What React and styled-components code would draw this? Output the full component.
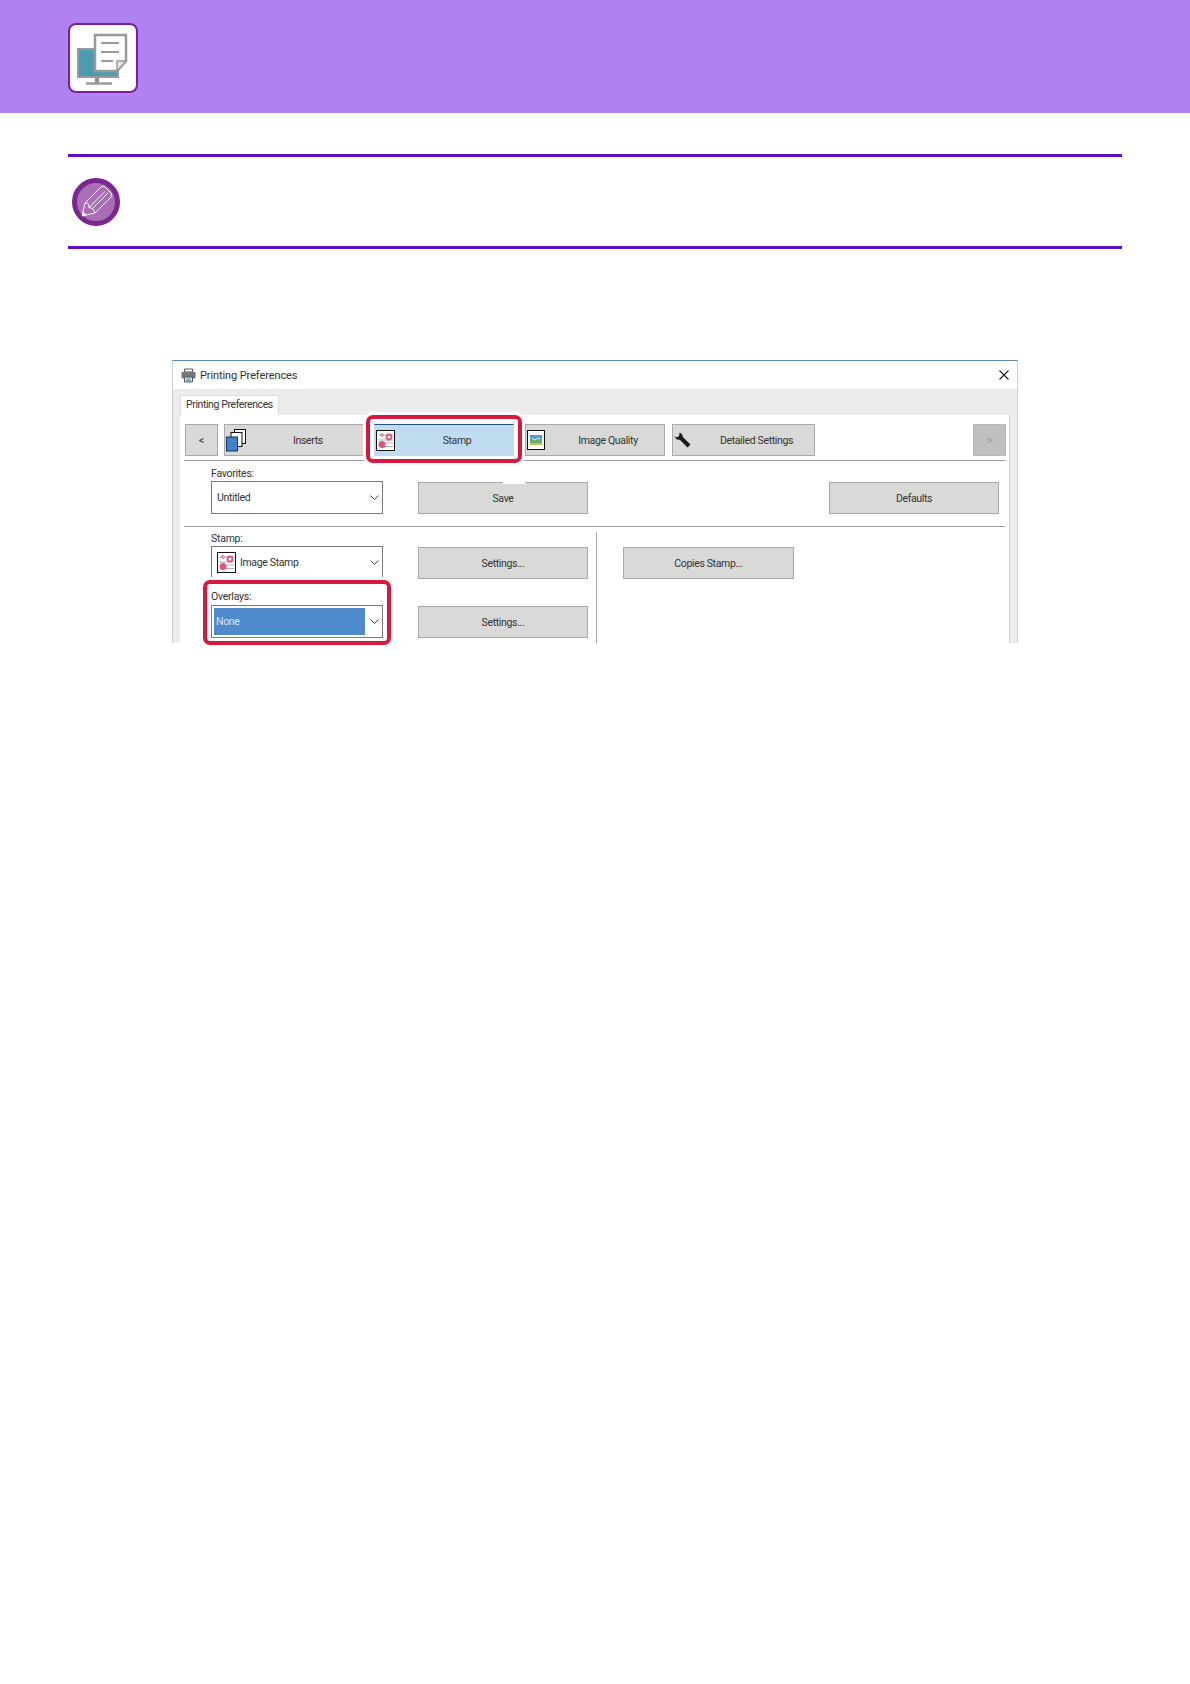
import React from "react";
import styled, { createGlobalStyle } from "styled-components";

const GlobalStyle = createGlobalStyle`
  html, body {
    margin: 0;
    padding: 0;
    background: #fff;
    font-family: Roboto, "Liberation Sans", sans-serif;
  }
  * {
    box-sizing: border-box;
  }
`;

const Page = styled.div`
  width: 1190px;
  height: 1684px;
  background: #fff;
  overflow: hidden;
`;

const Banner = styled.header`
  height: 113px;
  background: #b081f1;
  padding: 23px 0 0 68px;
`;

const IconTile = styled.div`
  width: 70px;
  height: 70px;
  background: #fff;
  border: 2px solid #7d1f98;
  border-radius: 8px;
`;

const NoteBar = styled.section`
  height: 95px;
  margin: 41px 68px 0;
  padding-left: 4px;
  border-top: 3px solid #5f0fc4;
  border-bottom: 3px solid #5f0fc4;
  display: flex;
  align-items: center;
`;

const Frame = styled.div`
  position: relative;
  width: 846px;
  margin: 111px 0 0 172px;
`;

const Window = styled.div`
  height: 283px;
  overflow: hidden;
  background: #ececec;
  border: 1px solid #c5d1df;
  border-top-color: #5f86ad;
  border-bottom: 0;
`;

const TitleBar = styled.div`
  height: 28px;
  background: #fff;
  padding: 0 8px;
  display: flex;
  align-items: center;
  gap: 4px;
  font-size: 11px;
  letter-spacing: -0.1px;
  color: #333;
`;

const CloseGlyph = styled.svg`
  margin-left: auto;
`;

const TabStrip = styled.div`
  height: 26px;
  padding: 6px 0 0 7px;
`;

const Tab = styled.div`
  width: 99px;
  height: 20px;
  background: #fff;
  border: 1px solid #dcdcdc;
  border-bottom: 0;
  padding-left: 5px;
  font-size: 10.5px;
  letter-spacing: -0.4px;
  line-height: 18px;
  white-space: nowrap;
  color: #333;
`;

const Panel = styled.div`
  margin: 0 7px;
  height: 240px;
  background: #fff;
  border-right: 1px solid #d0d0d0;
`;

const Toolbar = styled.div`
  display: flex;
  padding: 9px 3px 0 5px;
  height: 45px;
`;

const ToolButton = styled.div`
  width: ${(p) => p.$width}px;
  margin-left: ${(p) => p.$gap || 0}px;
  height: 32px;
  display: flex;
  align-items: center;
  font-size: 10.5px;
  letter-spacing: -0.35px;
  color: #333;
  background: ${(p) => (p.$active ? "#bfdcf0" : "#d9d9d7")};
  border: 1px solid ${(p) => (p.$active ? "#bfdcf0" : "#a9a9a9")};
  border-top-color: ${(p) => (p.$active ? "#22507f" : "#a9a9a9")};
`;

const ToolIcon = styled.span`
  flex: none;
  width: 26px;
  padding-left: 1px;
  display: flex;
  align-items: center;
`;

const ToolLabel = styled.span`
  flex: 1;
  text-align: center;
`;

const PagerButton = styled.div`
  width: 33px;
  height: 32px;
  margin-left: ${(p) => (p.$end ? "auto" : "0")};
  display: flex;
  align-items: center;
  justify-content: center;
  font-size: 11px;
  color: ${(p) => (p.$disabled ? "#999" : "#444")};
  background: ${(p) => (p.$disabled ? "#bfbfbf" : "#d9d9d7")};
  border: 1px solid ${(p) => (p.$disabled ? "#b5b5b5" : "#a9a9a9")};
`;

const Rule = styled.div`
  height: 1px;
  margin: 0 4px;
  background: #9a9a9a;
`;

const FavoritesRow = styled.div`
  display: flex;
  align-items: flex-end;
  padding: 6px 10px 12px 31px;
`;

const StampSection = styled.div`
  display: flex;
  height: 116px;
`;

const StampColumn = styled.div`
  width: 417px;
  margin-top: 5px;
  border-right: 1px solid #a8a8a8;
`;

const ControlRow = styled.div`
  display: flex;
  align-items: flex-end;
  padding-left: 31px;
  margin-top: ${(p) => p.$top || 0}px;
`;

const Field = styled.div`
  width: 172px;
  margin-right: 35px;
  display: flex;
  flex-direction: column;
  gap: ${(p) => p.$gap || 0}px;
`;

const FieldLabel = styled.div`
  height: 14px;
  font-size: 10.5px;
  letter-spacing: -0.25px;
  line-height: 14px;
  color: #333;
`;

const Select = styled.div`
  height: 33px;
  padding: 2px;
  display: flex;
  align-items: center;
  font-size: 10.5px;
  letter-spacing: -0.35px;
  color: #333;
  background: #fff;
  border: 1px solid #7a7a7a;
`;

const SelectValue = styled.div`
  width: 151px;
  height: 100%;
  padding-left: ${(p) => (p.$selected ? "2px" : "3px")};
  display: flex;
  align-items: center;
  gap: 4px;
  background: ${(p) => (p.$selected ? "#4f8acb" : "transparent")};
  color: ${(p) => (p.$selected ? "#d5e6f8" : "#333")};
`;

const Chevron = styled.svg`
  margin-left: 5px;
`;

const ActionButton = styled.div`
  position: relative;
  width: ${(p) => p.$width || 170}px;
  height: 32px;
  margin-left: ${(p) => p.$left || "0"};
  display: flex;
  align-items: center;
  justify-content: center;
  font-size: 10.5px;
  letter-spacing: -0.35px;
  color: #333;
  background: #d9d9d7;
  border: 1px solid #a9a9a9;
`;

const SaveNotch = styled.span`
  position: absolute;
  left: 84px;
  top: -2px;
  width: 22px;
  height: 3px;
  background: #fff;
`;

const SideColumn = styled.div`
  padding: 20px 0 0 26px;
`;

const Callout = styled.div`
  position: absolute;
  left: ${(p) => p.$x}px;
  top: ${(p) => p.$y}px;
  width: ${(p) => p.$w}px;
  height: ${(p) => p.$h}px;
  border: 4px solid #d9183f;
  border-radius: 7px;
  box-shadow: 0 0 0 3px #fff;
  pointer-events: none;
`;

const PencilBadge = () => (
  <svg width="48" height="48" viewBox="0 0 48 48">
    <circle cx="24" cy="24" r="21.5" fill="#a96fb4" stroke="#7b278f" strokeWidth="5" />
    <g fill="none" stroke="#fff" strokeWidth="0.9" strokeLinejoin="round">
      <path d="M10 38 L13 25 L29 9 Q31 7.5 33 9 L39 15 Q40.5 17 39 19 L23 35 Z" />
      <path d="M13 25 Q15 24.500 16.500 26 L17 29.500 L20.500 30.500 Q22.500 32.500 23 35" />
      <path d="M17 29.500 L33 13.500 M20.500 30.500 L36 15" />
    </g>
    <path d="M10 38 L11 33.500 L14.500 37 Z" fill="#fff" />
  </svg>
);

const DriverIcon = () => (
  <svg width="66" height="66" viewBox="0 0 66 66">
    <rect x="8" y="24" width="40" height="28" fill="#4a9cb2" stroke="#9a9a9a" strokeWidth="2" />
    <path d="M27 53v5" stroke="#8f8f8f" strokeWidth="4" />
    <path d="M16 58.500h26" stroke="#9a9a9a" strokeWidth="2.500" />
    <path d="M25 10h31v26l-9 10H25z" fill="#fff" stroke="#9a9a9a" strokeWidth="2.500" />
    <path d="M47 46v-10h9z" fill="#e8e8e8" stroke="#9a9a9a" strokeWidth="1.500" />
    <path d="M31 18h18M31 27h18M31 36h12" stroke="#9a9a9a" strokeWidth="2" />
  </svg>
);

const PrinterIcon = () => (
  <svg width="15" height="15" viewBox="0 0 15 15">
    <path d="M3.500 1h8v3h-8z" fill="#fff" stroke="#555" />
    <rect x="0.500" y="4" width="14" height="6.500" rx="1" fill="#777" />
    <path d="M3.500 9h8v5h-8z" fill="#dfe9ee" stroke="#555" />
    <path d="M5 11h5M5 12.500h5" stroke="#5a93a8" />
  </svg>
);

const CopiesIcon = () => (
  <svg width="20" height="23" viewBox="0 0 20 23">
    <rect x="8.500" y="0.500" width="11" height="14" fill="#fff" stroke="#111" />
    <rect x="5" y="3.500" width="11" height="14" fill="#fff" stroke="#111" />
    <rect x="0.500" y="8" width="11" height="14" fill="#3f82cc" stroke="#16365c" />
  </svg>
);

const StampIcon = () => (
  <svg width="19" height="21" viewBox="0 0 19 21">
    <rect x="0.500" y="0.500" width="18" height="20" fill="#fff" stroke="#111" />
    <path d="M2 5h15M2 10h15M9 13h8M9 16.500h8" stroke="#999" strokeWidth="0.800" />
    <circle cx="6" cy="14.500" r="3.500" fill="#e2557a" />
    <circle cx="13" cy="7" r="2.500" fill="#fff" stroke="#e2557a" strokeWidth="1.800" />
    <circle cx="6" cy="5" r="1.300" fill="#fff" stroke="#e2557a" />
  </svg>
);

const QualityIcon = () => (
  <svg width="18" height="20" viewBox="0 0 18 20">
    <rect x="0.500" y="0.500" width="17" height="19" fill="#fff" stroke="#111" />
    <rect x="3" y="5" width="12" height="10" fill="#63b06a" />
    <path d="M3 5h12v4H3z" fill="#4f9fc0" />
    <path d="M5 8l3 2 3-2 2 1" stroke="#e6f4e6" fill="none" />
    <path d="M3 13h12v2H3z" fill="#c9c24a" />
  </svg>
);

const WrenchIcon = () => (
  <svg width="17" height="16" viewBox="0 0 17 16">
    <path
      d="M5.500 0.500 L8 2 L8.800 5 L16.500 12.500 L13.500 15.500 L5.800 7.800 L2.800 7.500 L0.500 4.500 L3.500 5.300 L5.300 3.500 Z"
      fill="#1a1a1a"
    />
  </svg>
);

const SelectChevron = () => (
  <Chevron width="9" height="5" viewBox="0 0 9 5">
    <path d="M0.500 0.500 L4.500 4.500 L8.500 0.500" fill="none" stroke="#444" />
  </Chevron>
);

export default function App() {
  return (
    <Page>
      <GlobalStyle />
      <Banner>
        <IconTile>
          <DriverIcon />
        </IconTile>
      </Banner>
      <NoteBar>
        <PencilBadge />
      </NoteBar>
      <Frame>
        <Window>
          <TitleBar>
            <PrinterIcon />
            Printing Preferences
            <CloseGlyph width="10" height="10" viewBox="0 0 10 10">
              <path d="M0.500 0.500 L9.500 9.500 M9.500 0.500 L0.500 9.500" stroke="#222" strokeWidth="1.100" />
            </CloseGlyph>
          </TitleBar>
          <TabStrip>
            <Tab>Printing Preferences</Tab>
          </TabStrip>
          <Panel>
            <Toolbar>
              <PagerButton>&lt;</PagerButton>
              <ToolButton $width={142} $gap={6}>
                <ToolIcon><CopiesIcon /></ToolIcon>
                <ToolLabel>Inserts</ToolLabel>
              </ToolButton>
              <ToolButton $width={140} $gap={8} $active>
                <ToolIcon><StampIcon /></ToolIcon>
                <ToolLabel>Stamp</ToolLabel>
              </ToolButton>
              <ToolButton $width={140} $gap={11}>
                <ToolIcon><QualityIcon /></ToolIcon>
                <ToolLabel>Image Quality</ToolLabel>
              </ToolButton>
              <ToolButton $width={143} $gap={7}>
                <ToolIcon><WrenchIcon /></ToolIcon>
                <ToolLabel>Detailed Settings</ToolLabel>
              </ToolButton>
              <PagerButton $end $disabled>&gt;</PagerButton>
            </Toolbar>
            <Rule />
            <FavoritesRow>
              <Field>
                <FieldLabel>Favorites:</FieldLabel>
                <Select>
                  <SelectValue>Untitled</SelectValue>
                  <SelectChevron />
                </Select>
              </Field>
              <ActionButton>
                <SaveNotch />
                Save
              </ActionButton>
              <ActionButton $left="auto">Defaults</ActionButton>
            </FavoritesRow>
            <Rule />
            <StampSection>
              <StampColumn>
                <ControlRow>
                  <Field>
                    <FieldLabel>Stamp:</FieldLabel>
                    <Select>
                      <SelectValue>
                        <StampIcon />
                        Image Stamp
                      </SelectValue>
                      <SelectChevron />
                    </Select>
                  </Field>
                  <ActionButton>Settings...</ActionButton>
                </ControlRow>
                <ControlRow $top={11}>
                  <Field $gap={1}>
                    <FieldLabel>Overlays:</FieldLabel>
                    <Select>
                      <SelectValue $selected>None</SelectValue>
                      <SelectChevron />
                    </Select>
                  </Field>
                  <ActionButton>Settings...</ActionButton>
                </ControlRow>
              </StampColumn>
              <SideColumn>
                <ActionButton $width={171}>Copies Stamp...</ActionButton>
              </SideColumn>
            </StampSection>
          </Panel>
        </Window>
        <Callout $x={194} $y={55} $w={156} $h={48} />
        <Callout $x={31} $y={220} $w={188} $h={65} />
      </Frame>
    </Page>
  );
}
